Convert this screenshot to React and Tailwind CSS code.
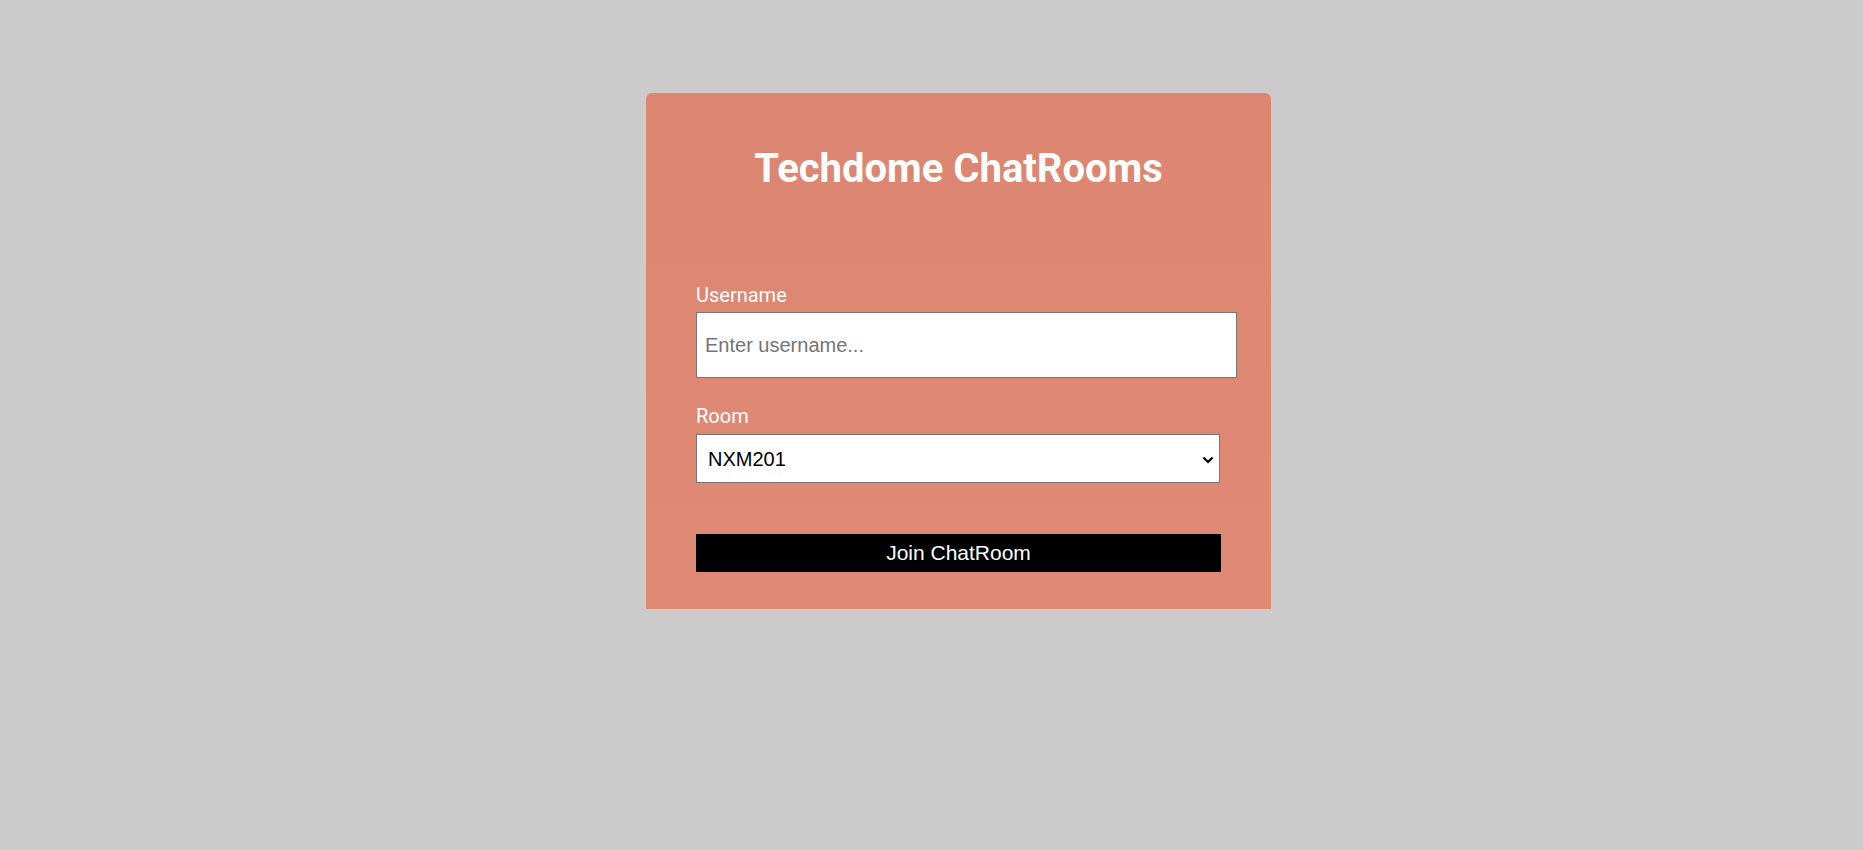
import { useState } from 'react';

function App () {
    const [username, setUsername] = useState('');
    const [room, setRoom] = useState('NXM201');

    return (
        <div className="min-h-screen bg-[#cbcbcb] pt-[93px] pl-[54px]">
            <div className="mx-auto w-[625px] rounded-t-md bg-gradient-to-b from-[#dc8571] to-[#e08a76] px-[50px] pt-[52px] pb-[37px]">
                <h1 className="text-center text-[40px] leading-[48px] font-bold text-white font-['Roboto',sans-serif]">
                    Techdome ChatRooms
                </h1>
                <form className="mt-[90px] flex flex-col" onSubmit={(e) => e.preventDefault()}>
                    <label className="text-[20px] leading-6 text-white font-['Roboto',sans-serif]">Username</label>
                    <input
                        type="text"
                        value={username}
                        onChange={(e) => setUsername(e.target.value)}
                        placeholder="Enter username..."
                        className="mt-[5px] h-[66px] w-[541px] border border-[#767676] bg-white pl-2 text-[20px] text-black placeholder:text-[#757575] font-['Liberation_Sans',Arial,sans-serif] outline-none"
                    />
                    <label className="mt-[26px] text-[20px] leading-6 text-white font-['Roboto',sans-serif]">Room</label>
                    <div className="relative mt-[6px] w-[524px]">
                        <select
                            value={room}
                            onChange={(e) => setRoom(e.target.value)}
                            className="h-[49px] w-full appearance-none border border-[#767676] bg-white pl-[11px] text-[20px] text-black font-['Liberation_Sans',Arial,sans-serif] outline-none"
                        >
                            <option value="NXM201">NXM201</option>
                            <option value="NXM202">NXM202</option>
                            <option value="NXM203">NXM203</option>
                        </select>
                        <svg className="pointer-events-none absolute right-[6px] top-[22px]" width="12" height="8" viewBox="0 0 12 8">
                            <path d="M1.5 1.5 L6 6 L10.5 1.5" fill="none" stroke="#000" strokeWidth="2.2" />
                        </svg>
                    </div>
                    <button
                        type="submit"
                        className="mt-[51px] h-[38px] w-full bg-black text-[21px] text-white font-['Liberation_Sans',Arial,sans-serif]"
                    >
                        Join ChatRoom
                    </button>
                </form>
            </div>
        </div>
    )
}

export default App
